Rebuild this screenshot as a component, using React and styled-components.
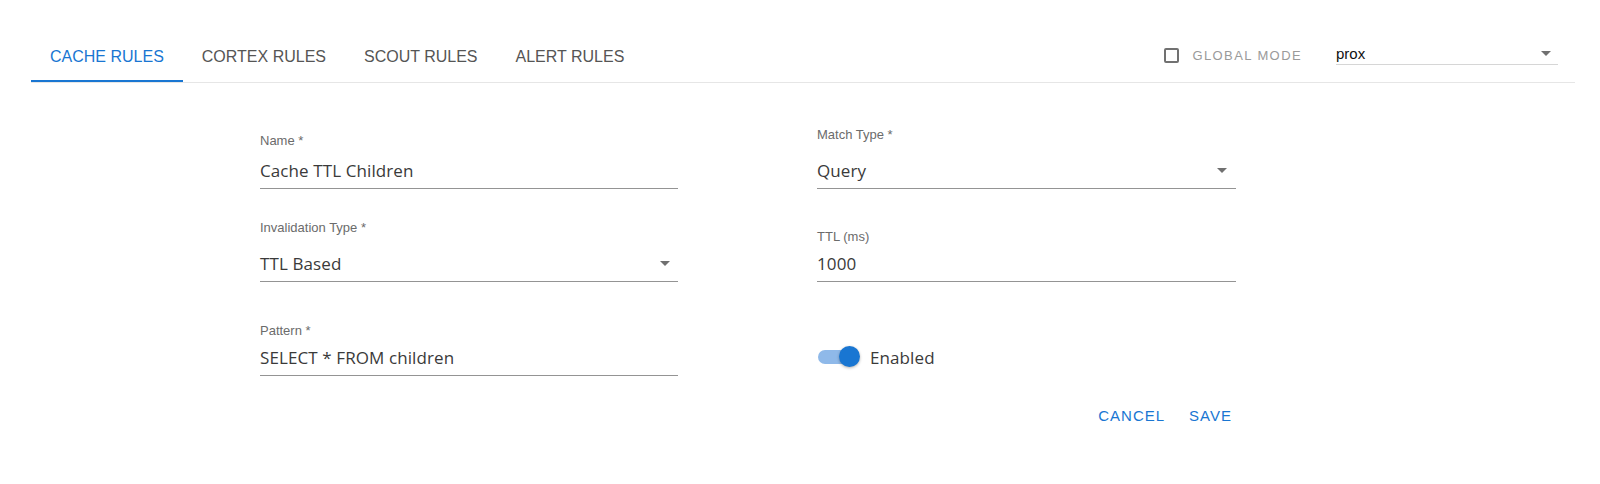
import styled, { createGlobalStyle } from "styled-components";

const GlobalStyle = createGlobalStyle`
  body {
    margin: 0;
    background: #fff;
    font-family: "Liberation Sans", Arial, sans-serif;
  }
`;

const Page = styled.div`
  width: 1600px;
  height: 484px;
  overflow: hidden;
`;

const Header = styled.div`
  display: flex;
  margin: 34px 25px 0 31px;
  border-bottom: 1px solid #e6e6e6;
`;

const TabList = styled.div`
  display: flex;
`;

const Tab = styled.button`
  height: 48px;
  box-sizing: border-box;
  padding: 3px 19px 4px;
  margin: 0;
  border: none;
  border-bottom: 2px solid ${(p) => (p.$active ? "#1976d2" : "transparent")};
  background: none;
  font-family: "Liberation Sans", Arial, sans-serif;
  font-size: 16px;
  color: ${(p) => (p.$active ? "#1976d2" : "#555")};
  cursor: pointer;
`;

const Controls = styled.div`
  margin-left: auto;
  display: flex;
  align-items: center;
  padding: 0 17px 6px 0;
`;

const CheckBox = styled.span`
  width: 15px;
  height: 15px;
  box-sizing: border-box;
  border: 2px solid #717171;
  border-radius: 2px;
`;

const CheckLabel = styled.span`
  margin-left: 13px;
  font-size: 13px;
  letter-spacing: 1.4px;
  color: #9a9a9a;
`;

const HeaderSelect = styled.div`
  margin: 0 0 3px 34px;
  width: 222px;
  height: 22px;
  display: flex;
  align-items: center;
  justify-content: space-between;
  border-bottom: 1px solid #d6d6d6;
  font-size: 15px;
  color: #111;
`;

const FormGrid = styled.div`
  display: grid;
  grid-template-columns: 418px 419px;
  grid-template-rows: 62px 93px 94px;
  column-gap: 139px;
  align-items: end;
  margin: 44px 0 0 260px;
`;

const Field = styled.div`
  display: flex;
  flex-direction: column;
`;

const Label = styled.label`
  font-size: 13px;
  line-height: 16px;
  color: #6b6b6b;
  margin-bottom: ${(p) => p.$gap}px;
`;

const InputLine = styled.div`
  display: flex;
  align-items: center;
  justify-content: space-between;
  height: 28px;
  padding-bottom: 4px;
  border-bottom: 1px solid #949494;
`;

const Value = styled.span`
  font-family: "Open Sans", "Noto Sans", sans-serif;
  font-size: 17px;
  letter-spacing: 0.1px;
  color: #3a3a3a;
`;

const ArrowIcon = styled.svg`
  width: 24px;
  height: 24px;
  margin-right: ${(p) => p.$inset || 0}px;
  fill: #707070;
  flex-shrink: 0;
`;

const SwitchRow = styled.div`
  display: flex;
  align-items: center;
  height: 38px;
`;

const Track = styled.span`
  position: relative;
  width: 34px;
  height: 14px;
  margin-left: 1px;
  border-radius: 7px;
  background: #8fb9e9;
`;

const Thumb = styled.span`
  position: absolute;
  left: 21px;
  top: -4px;
  width: 21px;
  height: 21px;
  border-radius: 50%;
  background: #1976d2;
  box-shadow: 0 1px 3px rgba(0, 0, 0, 0.3);
`;

const SwitchLabel = styled(Value)`
  margin-left: 18px;
`;

const Actions = styled.div`
  display: flex;
  justify-content: flex-end;
  gap: 8px;
  width: 980px;
  margin: 22px 0 0 260px;
`;

const TextButton = styled.button`
  padding: 6px 8px;
  line-height: 24px;
  border: none;
  background: none;
  font-family: "Liberation Sans", Arial, sans-serif;
  font-size: 15px;
  letter-spacing: 1px;
  color: #1976d2;
  cursor: pointer;
`;

const DropArrow = ({ inset }) => (
  <ArrowIcon viewBox="0 0 24 24" $inset={inset}>
    <path d="M7 10l5 5 5-5z" />
  </ArrowIcon>
);

const tabs = ["CACHE RULES", "CORTEX RULES", "SCOUT RULES", "ALERT RULES"];

const App = () => {
  return (
    <Page>
      <GlobalStyle />
      <Header>
        <TabList>
          {tabs.map((t, i) => (
            <Tab key={t} $active={i === 0}>
              {t}
            </Tab>
          ))}
        </TabList>
        <Controls>
          <CheckBox />
          <CheckLabel>GLOBAL MODE</CheckLabel>
          <HeaderSelect>
            <span>prox</span>
            <DropArrow />
          </HeaderSelect>
        </Controls>
      </Header>

      <FormGrid>
        <Field>
          <Label $gap={7}>Name *</Label>
          <InputLine>
            <Value>Cache TTL Children</Value>
          </InputLine>
        </Field>
        <Field>
          <Label $gap={13}>Match Type *</Label>
          <InputLine>
            <Value>Query</Value>
            <DropArrow inset={2} />
          </InputLine>
        </Field>
        <Field>
          <Label $gap={13}>Invalidation Type *</Label>
          <InputLine>
            <Value>TTL Based</Value>
            <DropArrow inset={1} />
          </InputLine>
        </Field>
        <Field>
          <Label $gap={4}>TTL (ms)</Label>
          <InputLine>
            <Value>1000</Value>
          </InputLine>
        </Field>
        <Field>
          <Label $gap={4}>Pattern *</Label>
          <InputLine>
            <Value>SELECT * FROM children</Value>
          </InputLine>
        </Field>
        <SwitchRow>
          <Track>
            <Thumb />
          </Track>
          <SwitchLabel>Enabled</SwitchLabel>
        </SwitchRow>
      </FormGrid>

      <Actions>
        <TextButton>CANCEL</TextButton>
        <TextButton>SAVE</TextButton>
      </Actions>
    </Page>
  );
};

export default App;
